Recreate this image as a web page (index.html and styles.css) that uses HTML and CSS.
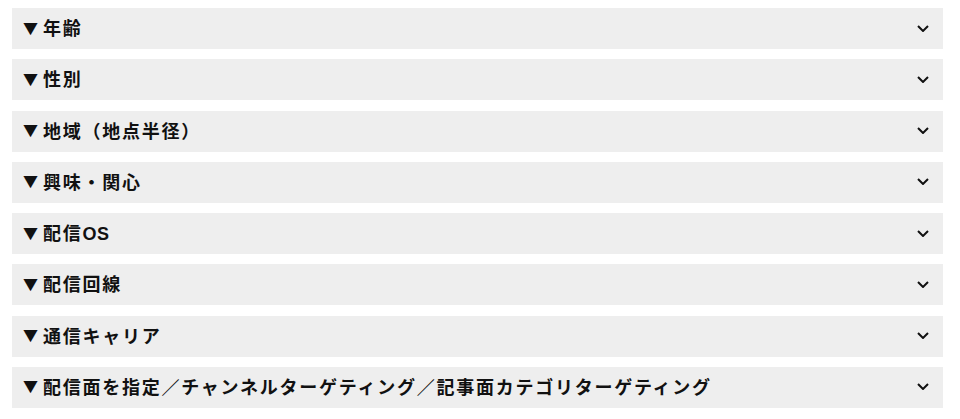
FILE: index.html
```html
<!DOCTYPE html>
<html lang="ja">
<head>
<meta charset="utf-8">
<title>ターゲティング</title>
<link rel="stylesheet" href="styles.css">
</head>
<body>
<div class="list">
  <div class="row"><span class="label"><span class="tri">▼</span>年齢</span><svg class="chev" viewBox="0 0 12 7" width="12" height="7"><path d="M1 1l5 5 5-5" fill="none" stroke="#111" stroke-width="2"/></svg></div>
  <div class="row"><span class="label"><span class="tri">▼</span>性別</span><svg class="chev" viewBox="0 0 12 7" width="12" height="7"><path d="M1 1l5 5 5-5" fill="none" stroke="#111" stroke-width="2"/></svg></div>
  <div class="row"><span class="label"><span class="tri">▼</span>地域（地点半径）</span><svg class="chev" viewBox="0 0 12 7" width="12" height="7"><path d="M1 1l5 5 5-5" fill="none" stroke="#111" stroke-width="2"/></svg></div>
  <div class="row"><span class="label"><span class="tri">▼</span>興味・関心</span><svg class="chev" viewBox="0 0 12 7" width="12" height="7"><path d="M1 1l5 5 5-5" fill="none" stroke="#111" stroke-width="2"/></svg></div>
  <div class="row"><span class="label"><span class="tri">▼</span>配信<span class="latin">OS</span></span><svg class="chev" viewBox="0 0 12 7" width="12" height="7"><path d="M1 1l5 5 5-5" fill="none" stroke="#111" stroke-width="2"/></svg></div>
  <div class="row"><span class="label"><span class="tri">▼</span>配信回線</span><svg class="chev" viewBox="0 0 12 7" width="12" height="7"><path d="M1 1l5 5 5-5" fill="none" stroke="#111" stroke-width="2"/></svg></div>
  <div class="row"><span class="label"><span class="tri">▼</span>通信キャリア</span><svg class="chev" viewBox="0 0 12 7" width="12" height="7"><path d="M1 1l5 5 5-5" fill="none" stroke="#111" stroke-width="2"/></svg></div>
  <div class="row"><span class="label"><span class="tri">▼</span>配信面を指定／チャンネルターゲティング／記事面カテゴリターゲティング</span><svg class="chev" viewBox="0 0 12 7" width="12" height="7"><path d="M1 1l5 5 5-5" fill="none" stroke="#111" stroke-width="2"/></svg></div>
</div>
</body>
</html>
```
FILE: styles.css
```css
html, body {
  margin: 0;
  padding: 0;
  background: #ffffff;
}
body {
  font-family: "Liberation Sans", "Noto Sans CJK JP", sans-serif;
  color: #111111;
}
.list {
  display: flex;
  flex-direction: column;
  gap: 10.25px;
  padding: 8px 17px 0 12px;
}
.row {
  height: 41px;
  box-sizing: border-box;
  background: #eeeeee;
  display: flex;
  align-items: center;
  justify-content: space-between;
  padding: 1px 14px 0 11px;
}
.label {
  font-size: 18px;
  font-weight: 700;
  letter-spacing: 1.75px;
  line-height: 1;
  white-space: nowrap;
  display: flex;
  align-items: center;
}
.tri {
  font-family: "Noto Sans CJK JP", sans-serif;
  font-size: 15px;
  line-height: 1;
  letter-spacing: 0;
  margin-right: 5px;
  margin-bottom: 4px;
}
.latin {
  letter-spacing: 0.5px;
}
.chev {
  display: block;
  flex: none;
  margin-top: -2px;
}
```
